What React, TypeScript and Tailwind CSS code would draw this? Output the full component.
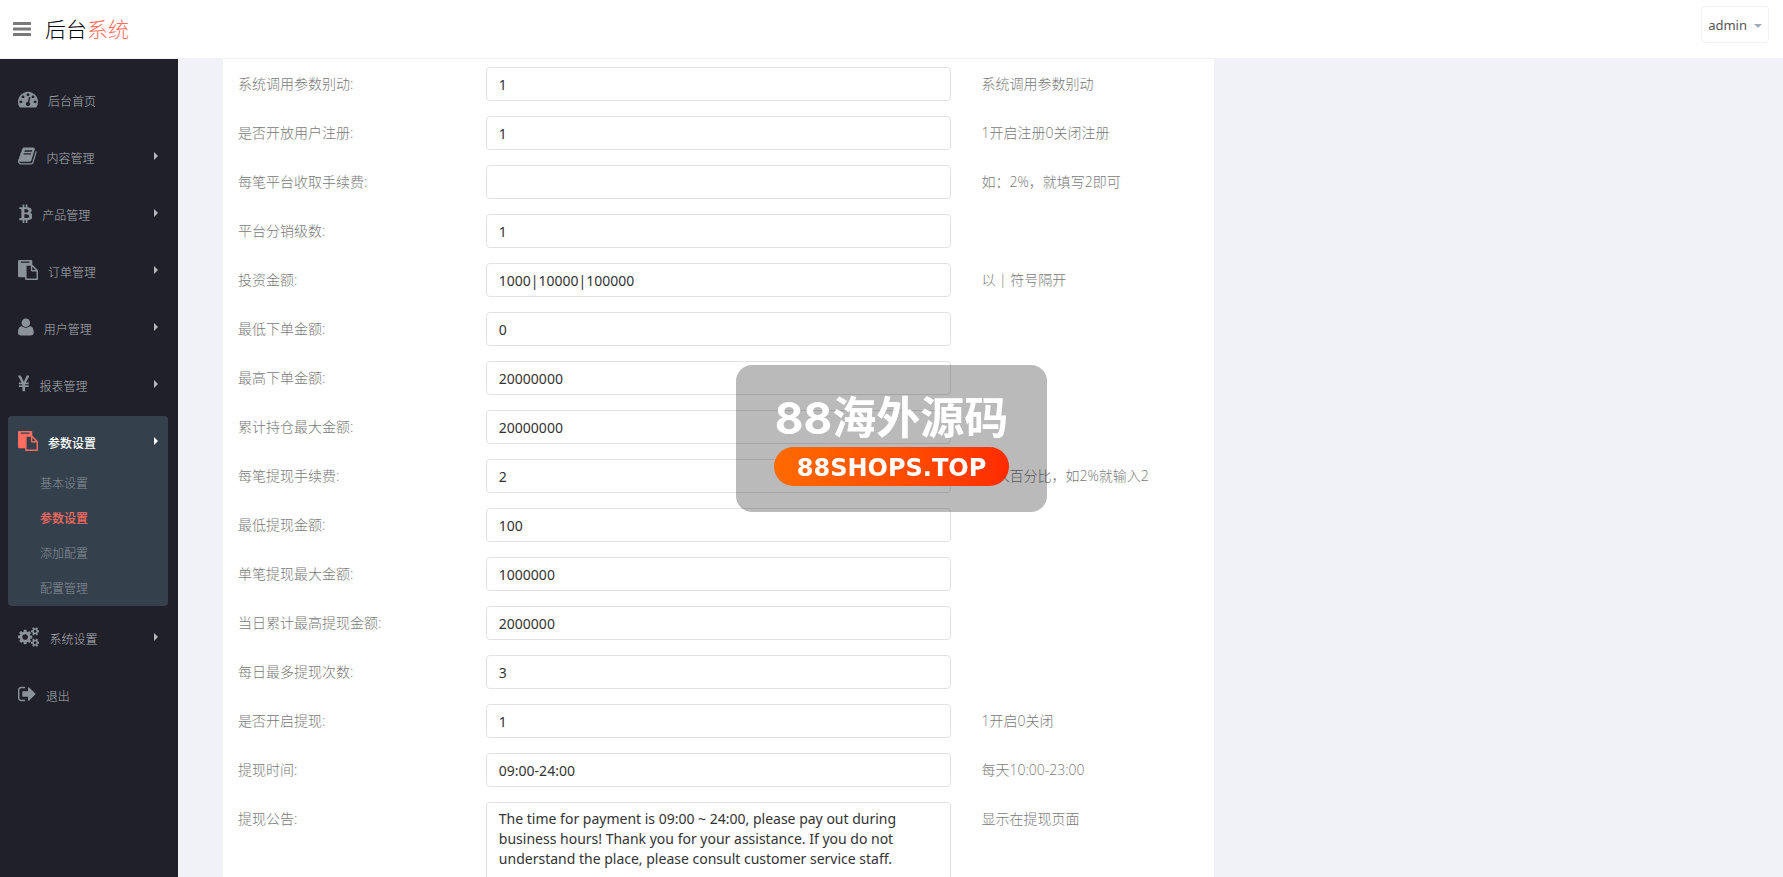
import { FC, ReactNode, useState } from "react";

interface IconShape {
  viewBox: string;
  path: string;
}

const ICONS: Record<string, IconShape> = {
  dashboard: {
    viewBox: "0 0 1792 1792",
    path: "M384 1152q0-53-37.5-90.5t-90.5-37.5-90.5 37.5-37.5 90.5 37.5 90.5 90.5 37.5 90.5-37.5 37.5-90.5zm192-448q0-53-37.5-90.5t-90.5-37.5-90.5 37.5-37.5 90.5 37.5 90.5 90.5 37.5 90.5-37.5 37.5-90.5zm428 481l101-382q6-26-7.5-48.5t-38.5-29.5-48 6.5-30 39.5l-101 382q-60 5-107 43.5t-63 98.5q-20 77 20 146t117 89 146-20 89-117q16-60-6-117t-72-91zm660-33q0-53-37.5-90.5t-90.5-37.5-90.5 37.5-37.5 90.5 37.5 90.5 90.5 37.5 90.5-37.5 37.5-90.5zm-640-640q0-53-37.5-90.5t-90.5-37.5-90.5 37.5-37.5 90.5 37.5 90.5 90.5 37.5 90.5-37.5 37.5-90.5zm448 192q0-53-37.5-90.5t-90.5-37.5-90.5 37.5-37.5 90.5 37.5 90.5 90.5 37.5 90.5-37.5 37.5-90.5zm320 448q0 261-141 483-19 29-54 29h-1402q-35 0-54-29-141-221-141-483 0-182 71-348t191-286 286-191 348-71 348 71 286 191 191 286 71 348z",
  },
  book: {
    viewBox: "64 0 1664 1792",
    path: "M1703 478q40 57 18 129l-275 906q-19 64-76.5 107.5t-122.5 43.5h-923q-77 0-148.5-53.5t-99.5-131.5q-24-67-2-127 0-4 3-27t4-37q1-8-3-21.5t-3-19.5q2-11 8-21t16.5-23.5 16.5-23.5q23-38 45-91.5t30-91.5q3-10 .5-30t-.5-28q3-11 17-28t17-23q21-36 42-92t25-90q1-9-2.5-32t.5-28q4-13 22-30.5t22-22.5q19-26 42.5-84.5t27.5-96.5q1-8-3-25.5t-2-26.5q2-8 9-18t18-23 17-21q8-12 16.5-30.5t15-35 16-36 19.5-32 26.5-23.5 36-11.5 47.5 5.5l-1 3q38-9 51-9h761q74 0 114 56t18 130l-274 906q-36 119-71.5 153.5t-128.5 34.5h-869q-27 0-38 15-11 16-1 43 24 70 144 70h923q29 0 56-15.5t35-41.5l300-987q7-22 5-57 38 15 59 43zm-1064 2q-4 13 2 22.5t20 9.5h608q13 0 25.5-9.5t16.5-22.5l21-64q4-13-2-22.5t-20-9.5h-608q-13 0-25.5 9.5t-16.5 22.5zm-83 256q-4 13 2 22.5t20 9.5h608q13 0 25.5-9.5t16.5-22.5l21-64q4-13-2-22.5t-20-9.5h-608q-13 0-25.5 9.5t-16.5 22.5z",
  },
  bitcoin: {
    viewBox: "0 0 1280 1792",
    path: "M1217 639q18 182-131 258 117 28 175 103t45 214q-7 71-32.5 125t-64.5 89-97 58.5-121.5 34.5-145.5 15v255h-154v-251q-80 0-122-1v252h-154v-255q-18 0-54-.5t-55-.5h-200l31-183h111q50 0 58-51v-402h16q-6-1-16-1v-287q-13-68-89-68h-111v-164l212 1q64 0 97-1v-252h154v247q82-2 122-2v-245h154v252q79 7 140 22.5t113 45 82.5 78 36.5 114.5zm-215 545q0-36-15-64t-37-46-57.5-30.5-65.5-18.5-74-9-69-3-64.5 1-47.5 1v338q8 0 37 .5t48 .5 53-1.5 58.5-4 57-8.5 55.5-14 47.5-21 39.5-30 24.5-40 9.5-51zm-71-476q0-33-12.5-58.5t-30.5-42-48-28-55-16.5-61.5-8-58-2.5-54 1-39.5.5v307q5 0 34.5.5t46.5 0 50-2 55-5.5 51.5-11 48.5-18.5 37-27 27-38.5 9-51z",
  },
  paste: {
    viewBox: "0 0 1792 1792",
    path: "M768 1664h896v-640h-416q-40 0-68-28t-28-68v-416h-384v1152zm256-1440v-64q0-13-9.5-22.5t-22.5-9.5h-704q-13 0-22.5 9.5t-9.5 22.5v64q0 13 9.5 22.5t22.5 9.5h704q13 0 22.5-9.5t9.5-22.5zm256 672h299l-299-299v299zm512 128v672q0 40-28 68t-68 28h-960q-40 0-68-28t-28-68v-160h-544q-40 0-68-28t-28-68v-1344q0-40 28-68t68-28h1088q40 0 68 28t28 68v328q21 13 36 28l408 408q28 28 48 76t20 88z",
  },
  user: {
    viewBox: "192 0 1408 1792",
    path: "M1600 1405q0 120-73 189.5t-194 69.5h-874q-121 0-194-69.5t-73-189.5q0-53 3.5-103.5t14-109 26.5-108.5 43-97.5 62-81 85.5-53.5 111.5-20q9 0 42 21.5t74.5 48 108 48 133.5 21.5 133.5-21.5 108-48 74.5-48 42-21.5q61 0 111.5 20t85.5 53.5 62 81 43 97.5 26.5 108.5 14 109 3.5 103.5zm-320-893q0 159-112.5 271.5t-271.5 112.5-271.5-112.5-112.5-271.5 112.5-271.5 271.5-112.5 271.5 112.5 112.5 271.5z",
  },
  yen: {
    viewBox: "383 0 1027 1792",
    path: "M985.5 1536h-172q-13 0-22.5-9t-9.5-23v-330h-288q-13 0-22.5-9t-9.5-23v-103q0-13 9.5-22.5t22.5-9.5h288v-85h-288q-13 0-22.5-9t-9.5-23v-104q0-13 9.5-22.5t22.5-9.5h214l-321-578q-8-16 0-32 10-16 28-16h194q19 0 29 18l215 425q19 38 56 125 10-24 30.5-68t27.5-61l191-420q8-19 29-19h191q17 0 27 16 9 14 1 31l-313 579h215q13 0 22.5 9.5t9.5 22.5v104q0 14-9.5 23t-22.5 9h-290v85h290q13 0 22.5 9.5t9.5 22.5v103q0 14-9.5 23t-22.5 9h-290v330q0 13-9.5 22.5t-22.5 9.5z",
  },
  cogs: {
    viewBox: "-64 0 1920 1792",
    path: "M832 896q0-106-75-181t-181-75-181 75-75 181 75 181 181 75 181-75 75-181zm768 512q0-52-38-90t-90-38-90 38-38 90q0 53 37.5 90.5t90.5 37.5 90.5-37.5 37.5-90.5zm0-1024q0-52-38-90t-90-38-90 38-38 90q0 53 37.5 90.5t90.5 37.5 90.5-37.5 37.5-90.5zm-384 421v185q0 10-7 19.5t-16 10.5l-155 24q-11 35-32 76 34 48 90 115 7 11 7 20 0 12-7 19-23 30-82.5 89.5t-78.5 59.5q-11 0-21-7l-115-90q-37 19-77 31-11 108-23 155-7 24-30 24h-186q-11 0-20-7.5t-10-17.5l-23-153q-34-10-75-31l-118 89q-7 7-20 7-11 0-21-8-144-133-144-160 0-9 7-19 10-14 41-53t47-61q-23-44-35-82l-152-24q-10-1-17-9.5t-7-19.5v-185q0-10 7-19.5t16-10.5l155-24q11-35 32-76-34-48-90-115-7-11-7-20 0-12 7-20 22-30 82-89t79-59q11 0 21 7l115 90q34-18 77-32 11-108 23-154 7-24 30-24h186q11 0 20 7.5t10 17.5l23 153q34 10 75 31l118-89q8-7 20-7 11 0 21 8 144 133 144 160 0 8-7 19-12 16-42 54t-45 60q23 48 34 82l152 23q10 2 17 10.5t7 19.5zm640 533v140q0 16-149 31-12 27-30 52 51 113 51 138 0 4-4 7-122 71-124 71-8 0-46-47t-52-68q-20 2-30 2t-30-2q-14 21-52 68t-46 47q-2 0-124-71-4-3-4-7 0-25 51-138-18-25-30-52-149-15-149-31v-140q0-16 149-31 13-29 30-52-51-113-51-138 0-4 4-7 4-2 35-20t59-34 30-16q8 0 46 46.5t52 67.5q20-2 30-2t30 2q51-71 92-112l6-2q4 0 124 70 4 3 4 7 0 25-51 138 17 23 30 52 149 15 149 31zm0-1024v140q0 16-149 31-12 27-30 52 51 113 51 138 0 4-4 7-122 71-124 71-8 0-46-47t-52-68q-20 2-30 2t-30-2q-14 21-52 68t-46 47q-2 0-124-71-4-3-4-7 0-25 51-138-18-25-30-52-149-15-149-31v-140q0-16 149-31 13-29 30-52-51-113-51-138 0-4 4-7 4-2 35-20t59-34 30-16q8 0 46 46.5t52 67.5q20-2 30-2t30 2q51-71 92-112l6-2q4 0 124 70 4 3 4 7 0 25-51 138 17 23 30 52 149 15 149 31z",
  },
  signOut: {
    viewBox: "64 0 1600 1792",
    path: "M704 1440q0 4 1 20t.5 26.5-3 23.5-10 19.5-20.5 6.5h-320q-119 0-203.5-84.5t-84.5-203.5v-704q0-119 84.5-203.5t203.5-84.5h320q13 0 22.5 9.5t9.5 22.5q0 4 1 20t.5 26.5-3 23.5-10 19.5-20.5 6.5h-320q-66 0-113 47t-47 113v704q0 66 47 113t113 47h312l11.5 1 11.5 3 8 5.5 7 9 2 13.5zm928-544q0 26-19 45l-544 544q-19 19-45 19t-45-19-19-45v-288h-448q-26 0-45-19t-19-45v-384q0-26 19-45t45-19h448v-288q0-26 19-45t45-19 45 19l544 544q19 19 19 45z",
  },
};

interface MenuItem {
  icon: string;
  label: string;
  children?: string[];
  hasArrow?: boolean;
}

const MENU: MenuItem[] = [
  { icon: "dashboard", label: "后台首页" },
  { icon: "book", label: "内容管理", hasArrow: true },
  { icon: "bitcoin", label: "产品管理", hasArrow: true },
  { icon: "paste", label: "订单管理", hasArrow: true },
  { icon: "user", label: "用户管理", hasArrow: true },
  { icon: "yen", label: "报表管理", hasArrow: true },
  {
    icon: "paste",
    label: "参数设置",
    hasArrow: true,
    children: ["基本设置", "参数设置", "添加配置", "配置管理"],
  },
  { icon: "cogs", label: "系统设置", hasArrow: true },
  { icon: "signOut", label: "退出" },
];

interface Setting {
  name: string;
  label: string;
  value: string;
  hint?: string;
  multiline?: boolean;
}

const SETTINGS: Setting[] = [
  { name: "sys_param", label: "系统调用参数别动", value: "1", hint: "系统调用参数别动" },
  { name: "reg_open", label: "是否开放用户注册", value: "1", hint: "1开启注册0关闭注册" },
  { name: "order_fee", label: "每笔平台收取手续费", value: "", hint: "如：2%，就填写2即可" },
  { name: "level", label: "平台分销级数", value: "1" },
  { name: "amounts", label: "投资金额", value: "1000|10000|100000", hint: "以 | 符号隔开" },
  { name: "order_min", label: "最低下单金额", value: "0" },
  { name: "order_max", label: "最高下单金额", value: "20000000" },
  { name: "hold_max", label: "累计持仓最大金额", value: "20000000" },
  { name: "cash_fee", label: "每笔提现手续费", value: "2", hint: "输入百分比，如2%就输入2" },
  { name: "cash_min", label: "最低提现金额", value: "100" },
  { name: "cash_max", label: "单笔提现最大金额", value: "1000000" },
  { name: "cash_day_max", label: "当日累计最高提现金额", value: "2000000" },
  { name: "cash_day_num", label: "每日最多提现次数", value: "3" },
  { name: "cash_open", label: "是否开启提现", value: "1", hint: "1开启0关闭" },
  { name: "cash_time", label: "提现时间", value: "09:00-24:00", hint: "每天10:00-23:00" },
  {
    name: "cash_notice",
    label: "提现公告",
    value:
      "The time for payment is 09:00 ~ 24:00, please pay out during business hours! Thank you for your assistance. If you do not understand the place, please consult customer service staff.",
    hint: "显示在提现页面",
    multiline: true,
  },
];

const Glyph: FC<{ name: string }> = ({ name }) => (
  <svg viewBox={ICONS[name].viewBox} className="h-5 w-auto shrink-0 fill-current" aria-hidden="true">
    <path d={ICONS[name].path} />
  </svg>
);

const Header: FC = () => (
  <header className="flex h-[59px] shrink-0 items-center border-b border-[#f1f2f7] bg-white pr-3.5 pl-[13px]">
    <button type="button" aria-label="切换菜单" className="text-[#797979]">
      <svg viewBox="0 0 18 14" className="h-3.5 w-[18px] fill-current" aria-hidden="true">
        <rect width="18" height="3" rx="0.6" />
        <rect y="5.5" width="18" height="3" rx="0.6" />
        <rect y="11" width="18" height="3" rx="0.6" />
      </svg>
    </button>
    <a href="#" className="ml-3.5 text-[21px] leading-8 font-light text-black">
      后台<span className="text-[#ff6c60]">系统</span>
    </a>
    <button
      type="button"
      className="mb-[9px] ml-auto flex h-[37px] items-center gap-[7px] rounded border border-[#f1f2f7] px-1.5 pt-0.5 font-['Noto_Sans',sans-serif] text-[13px] text-[#555]"
    >
      admin
      <svg viewBox="0 0 8 4" className="h-1 w-2 fill-[#a4aabb]" aria-hidden="true">
        <path d="M0 0h8L4 4z" />
      </svg>
    </button>
  </header>
);

const SidebarItem: FC<{ item: MenuItem }> = ({ item }) => {
  const open = Boolean(item.children);
  return (
    <li className={open ? "-mb-px rounded bg-[#35404d]" : ""}>
      <a href="#" className="flex h-[50px] items-center px-2.5 text-[#8b9299]">
        <span className={open ? "text-[#ff6c60]" : ""}>
          <Glyph name={item.icon} />
        </span>
        <span className={`ml-2.5 pt-1.5 text-xs ${open ? "font-medium text-white" : "font-light text-[#aeb2b7]"}`}>
          {item.label}
        </span>
        {item.hasArrow && (
          <svg
            viewBox="0 0 4 8"
            className={`ml-auto h-2 w-1 ${open ? "fill-white" : "fill-[#b5b7ba]"}`}
            aria-hidden="true"
          >
            <path d="M0 0l4 4-4 4z" />
          </svg>
        )}
      </a>
      {item.children && (
        <ul>
          {item.children.map((child) => (
            <li key={child}>
              <a
                href="#"
                className={`flex h-[35px] items-center pl-8 text-xs ${
                  child === item.label ? "font-medium text-[#ff6c60]" : "font-light text-[#8a9299]"
                }`}
              >
                {child}
              </a>
            </li>
          ))}
        </ul>
      )}
    </li>
  );
};

const Cell: FC<{ children?: ReactNode; className?: string }> = ({ children, className = "" }) => (
  <div className={`px-[15px] ${className}`}>{children}</div>
);

const SettingRow: FC<{ setting: Setting }> = ({ setting }) => {
  const [value, setValue] = useState(setting.value);
  const field =
    "block w-full rounded border border-[#e2e2e4] bg-white px-3 font-['Noto_Sans','Noto_Sans_CJK_SC',sans-serif] text-sm leading-5 text-[#333] outline-none focus:border-[#517397]";

  return (
    <div className="mb-[15px] grid grid-cols-4 text-sm text-[#797979]">
      <Cell className="pt-[7px] font-light">
        <label htmlFor={setting.name} className="block leading-5">
          {setting.label}:
        </label>
      </Cell>
      <Cell className="col-span-2">
        {setting.multiline ? (
          <textarea
            id={setting.name}
            rows={5}
            className={`${field} resize-none py-1.5`}
            value={value}
            onChange={(e) => setValue(e.target.value)}
          />
        ) : (
          <input
            id={setting.name}
            type="text"
            className={`${field} h-[34px] py-1.5`}
            value={value}
            onChange={(e) => setValue(e.target.value)}
          />
        )}
      </Cell>
      <Cell className="pt-[7px] leading-5 font-light">{setting.hint}</Cell>
    </div>
  );
};

const Watermark: FC = () => (
  <div className="pointer-events-none fixed inset-0 flex items-center justify-center">
    <div className="flex flex-col items-center gap-1.5 rounded-2xl bg-black/27 px-[38px] pt-[31px] pb-[26px] text-white">
      <div className="font-[Inter,'Noto_Sans_CJK_SC',sans-serif] text-[44px] leading-[45px] font-bold">88海外源码</div>
      <div className="flex h-[39px] w-[235px] items-center justify-center rounded-full bg-linear-to-r from-[#ff6a00] to-[#ff2a00] pt-0.5 font-['DejaVu_Sans',sans-serif] text-2xl font-bold">
        88SHOPS.TOP
      </div>
    </div>
  </div>
);

export default function App() {
  return (
    <div className="flex h-screen flex-col overflow-hidden bg-[#f1f2f7] font-['Open_Sans','Noto_Sans_CJK_SC',sans-serif]">
      <Header />
      <div className="flex min-h-0 flex-1">
        <nav className="w-[178px] shrink-0 bg-[#20202a] pt-[15px] pr-2.5 pl-2">
          <ul className="flex flex-col gap-[7px]">
            {MENU.map((item) => (
              <SidebarItem key={item.label} item={item} />
            ))}
          </ul>
        </nav>
        <main className="min-w-0 flex-1 overflow-hidden pr-[43px] pl-[30px]">
          <div className="w-8/12 px-[15px]">
            <form className="bg-white pt-2" onSubmit={(e) => e.preventDefault()}>
              {SETTINGS.map((setting) => (
                <SettingRow key={setting.name} setting={setting} />
              ))}
            </form>
          </div>
        </main>
      </div>
      <Watermark />
    </div>
  );
}
